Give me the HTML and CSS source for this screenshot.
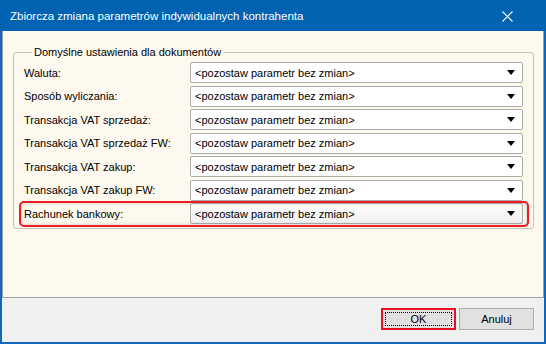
FILE: index.html
```html
<!DOCTYPE html>
<html lang="pl">
<head>
    <meta charset="UTF-8">
    <title>Zbiorcza zmiana parametrów indywidualnych kontrahenta</title>
    <link rel="stylesheet" href="styles.css">
</head>
<body>
<div class="window">
	<div class="title-bar">
		<span class="title-text">Zbiorcza zmiana parametrów indywidualnych kontrahenta</span>
		<svg class="close-icon" width="11" height="11" viewBox="0 0 11 11">
			<path d="M0.5 0.5 L10.5 10.5 M10.5 0.5 L0.5 10.5" stroke="#fff" stroke-width="1.1" fill="none"/>
		</svg>
	</div>
	<div class="panel">
		<fieldset class="group-box">
			<legend class="group-title">Domyślne ustawienia dla dokumentów</legend>
			<div class="form-row">
				<span class="row-label">Waluta:</span>
				<div class="combo"><span class="combo-text">&lt;pozostaw parametr bez zmian&gt;</span><span class="combo-arrow"></span></div>
			</div>
			<div class="form-row">
				<span class="row-label">Sposób wyliczania:</span>
				<div class="combo"><span class="combo-text">&lt;pozostaw parametr bez zmian&gt;</span><span class="combo-arrow"></span></div>
			</div>
			<div class="form-row">
				<span class="row-label">Transakcja VAT sprzedaż:</span>
				<div class="combo"><span class="combo-text">&lt;pozostaw parametr bez zmian&gt;</span><span class="combo-arrow"></span></div>
			</div>
			<div class="form-row">
				<span class="row-label">Transakcja VAT sprzedaż FW:</span>
				<div class="combo"><span class="combo-text">&lt;pozostaw parametr bez zmian&gt;</span><span class="combo-arrow"></span></div>
			</div>
			<div class="form-row">
				<span class="row-label">Transakcja VAT zakup:</span>
				<div class="combo"><span class="combo-text">&lt;pozostaw parametr bez zmian&gt;</span><span class="combo-arrow"></span></div>
			</div>
			<div class="form-row">
				<span class="row-label">Transakcja VAT zakup FW:</span>
				<div class="combo"><span class="combo-text">&lt;pozostaw parametr bez zmian&gt;</span><span class="combo-arrow"></span></div>
			</div>
			<div class="form-row marked">
				<span class="row-label">Rachunek bankowy:</span>
				<div class="combo combo-hover"><span class="combo-text">&lt;pozostaw parametr bez zmian&gt;</span><span class="combo-arrow"></span></div>
			</div>
		</fieldset>
	</div>
	<div class="footer">
		<button class="btn btn-ok"><span class="btn-focus">OK</span></button>
		<button class="btn">Anuluj</button>
	</div>
</div>
</body>
</html>
```

FILE: styles.css
```css
*{
	padding:0;margin:0;box-sizing:border-box;
}
body{font-family:'Liberation Sans',Arial,sans-serif;font-size:11px;color:#000;background:#fff;}

.window{
	width:546px;
	height:344px;
	background:#1167bd;
	padding:0 2px 2px 2px;
	display:flex;
	flex-direction:column;
}
.title-bar{
	height:31px;
	margin:0 -2px;
	padding:0 33px 0 10px;
	background:#0063b1;
	display:flex;
	justify-content:space-between;
	align-items:center;
	color:#fff;
	font-size:11.5px;
}
.title-text{padding-top:1px;}
.close-icon{display:block;margin-top:1px;}

.panel{
	height:267px;
	background:#fef9ee;
	border:1px solid #a0a0a0;
	border-top:0;
	padding:14px 9px 0 10px;
}
.group-box{
	border:1px solid #c4c2bc;
	border-radius:3px;
	padding:3px 10px 4px 10px;
	display:flex;
	flex-direction:column;
	gap:2.5px;
}
.group-title{
	margin-left:8px;
	padding:0 2px;
	line-height:14px;
}
.form-row{
	display:flex;
	align-items:center;
	height:21px;
	position:relative;
}
.row-label{width:166px;}
.combo{
	flex:1;
	height:21px;
	background:#fff;
	border:1px solid #acacac;
	border-radius:2px;
	display:flex;
	align-items:center;
	justify-content:space-between;
	padding:0 7px 0 4px;
}
.combo-hover{background:linear-gradient(#fdfdfd,#f0f0f0);}
.combo-arrow{
	width:0;height:0;
	border-left:4.5px solid transparent;
	border-right:4.5px solid transparent;
	border-top:5px solid #000;
}
.marked::before{
	content:"";
	position:absolute;
	top:-2px;bottom:-3px;left:-5px;right:-6px;
	border:2px solid #ee1c24;
	border-radius:5px;
	box-shadow:inset 0 0 4px rgba(0,0,0,.18);
	pointer-events:none;
}

.footer{
	flex:1;
	background:#f0f0f0;
	display:flex;
	justify-content:flex-end;
	align-items:flex-start;
	gap:3px;
	padding:10px 10px 0 0;
}
.btn{
	width:75px;
	height:22px;
	background:#e1e1e1;
	border:1px solid #adadad;
	font-family:'Liberation Sans',Arial,sans-serif;
	font-size:11px;
	color:#000;
}
.btn-ok{
	border:2px solid #e81123;
	padding:2px;
}
.btn-focus{
	display:flex;
	align-items:center;
	justify-content:center;
	height:100%;
	border:1px dotted #000;
}
```
